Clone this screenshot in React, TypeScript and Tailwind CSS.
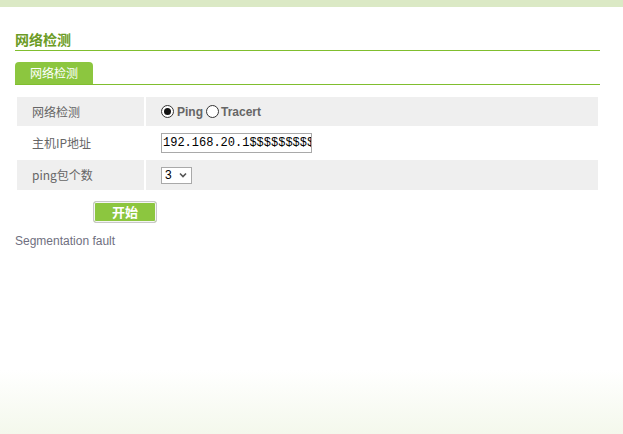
import React from "react";

function Radio({ checked }: { checked?: boolean }) {
  return (
    <span className="inline-flex h-[13px] w-[13px] items-center justify-center rounded-full border border-[#333] bg-white">
      {checked ? <span className="h-[7px] w-[7px] rounded-full bg-[#111]" /> : null}
    </span>
  );
}

const cjkFont = { fontFamily: "'Noto Sans CJK SC', sans-serif" };

export default function App() {
  return (
    <div className="relative h-[434px] w-[623px] overflow-hidden bg-[linear-gradient(to_bottom,#ffffff_0px,#ffffff_370px,#f4f8ec_434px)] font-['Liberation_Sans','Noto_Sans_CJK_SC',sans-serif]">
      <div className="h-[7px] bg-[#dbe9c5]" />
      <div className="pl-[15px] pr-[23px] pt-[22px]">
        <div className="h-[21px] text-[14px] font-bold leading-[20px] text-[#6b9b24]" style={cjkFont}>
          网络检测
        </div>
        <div className="h-px bg-[#80be2e]" />
        <div className="mt-[11px] flex">
          <div className="flex h-[22px] w-[78px] items-center justify-center rounded-t-[4px] bg-[#8cc63f] text-[12px] leading-[14px] text-white" style={cjkFont}>
            网络检测
          </div>
        </div>
        <div className="h-px bg-[#80be2e]" />
        <div className="ml-[2px] mt-[12px] w-[581px] text-[12px] text-[#666]">
          <div className="flex h-[29px] gap-[2px]">
            <div className="flex w-[127px] items-center bg-[#efefef] pl-[15px]" style={cjkFont}>网络检测</div>
            <div className="flex flex-1 items-center bg-[#efefef] pl-[15px] font-bold">
              <Radio checked />
              <span className="ml-[3px]">Ping</span>
              <span className="ml-[3px] inline-flex"><Radio /></span>
              <span className="ml-[2px]">Tracert</span>
            </div>
          </div>
          <div className="flex h-[34px] gap-[2px]">
            <div className="flex w-[127px] items-center pl-[15px]" style={cjkFont}>主机IP地址</div>
            <div className="flex flex-1 items-center pl-[15px]">
              <div className="h-[20px] w-[151px] overflow-hidden whitespace-nowrap border border-[#a9a9a9] bg-white pl-[1px] font-['Liberation_Mono',monospace] text-[12px] leading-[18px] text-black">
                192.168.20.1$$$$$$$$$$
              </div>
            </div>
          </div>
          <div className="flex h-[30px] gap-[2px]">
            <div className="flex w-[127px] items-center bg-[#efefef] pl-[15px]" style={cjkFont}>ping包个数</div>
            <div className="flex flex-1 items-center bg-[#efefef] pl-[15px]">
              <div className="flex h-[17px] w-[31px] items-center border border-[#a9a9a9] bg-white pl-[3px] text-[12px] leading-[15px] text-black">
                <span>3</span>
                <svg className="ml-[7px]" width="8" height="6" viewBox="0 0 8 6">
                  <path d="M1 1.5 L4 4.5 L7 1.5" fill="none" stroke="#555" strokeWidth="1.6" />
                </svg>
              </div>
            </div>
          </div>
        </div>
        <div className="ml-[78px] mt-[11px] flex h-[22px] w-[64px] items-center justify-center rounded-[3px] border border-[#c8c8c8] bg-[#8cc63f] text-[13px] font-bold leading-[14px] text-white shadow-[inset_0_0_0_1px_#f4f4f4]" style={cjkFont}>
          开始
        </div>
        <div className="mt-[11px] text-[12px] leading-[14px] text-[#6f6f80]">Segmentation fault</div>
      </div>
    </div>
  );
}
